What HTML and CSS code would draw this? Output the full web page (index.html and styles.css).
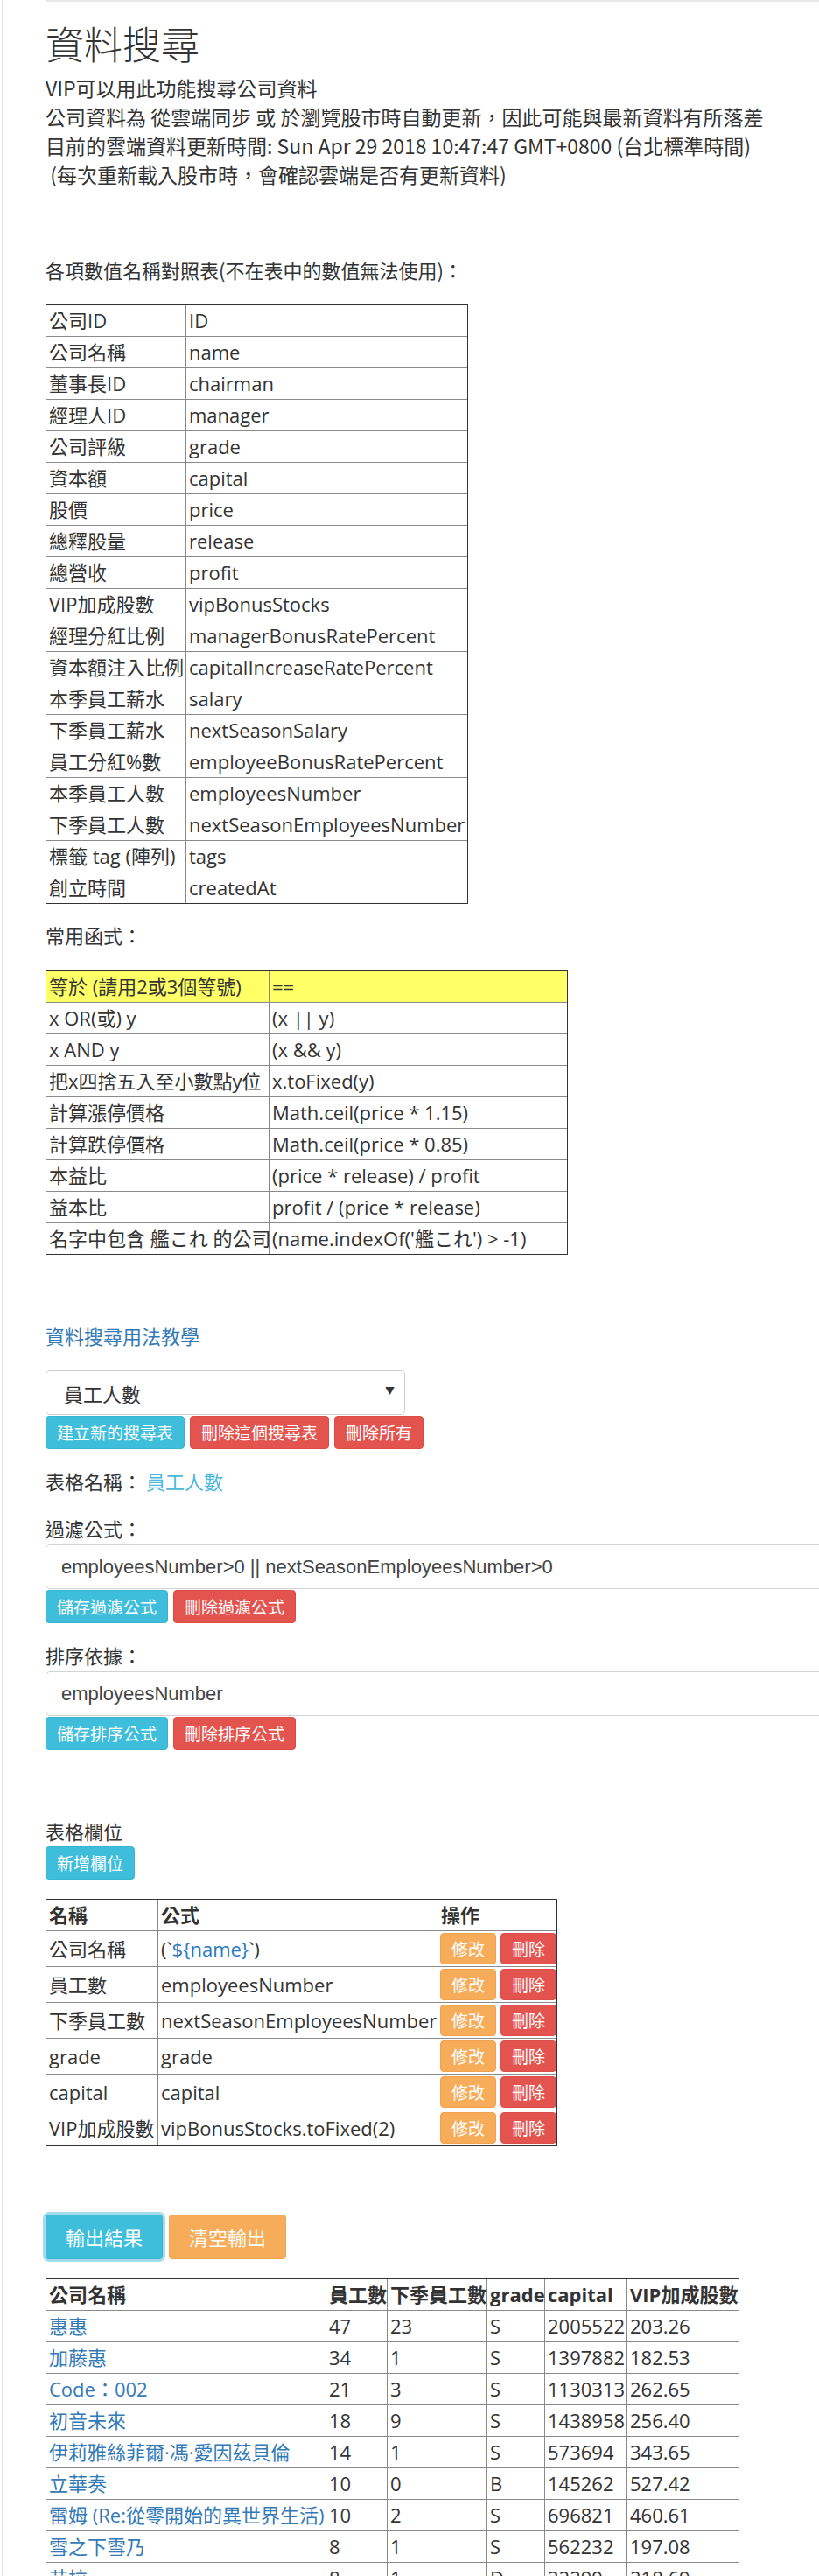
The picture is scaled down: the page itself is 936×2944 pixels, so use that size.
FILE: index.html
```html
<!DOCTYPE html>
<html lang="zh-Hant">
<head>
<meta charset="utf-8">
<title>資料搜尋</title>
<link rel="stylesheet" href="styles.css">
</head>
<body>
<div class="frame">
<div class="content">
  <h1 class="title">資料搜尋</h1>
  <div class="intro">
    <div>VIP可以用此功能搜尋公司資料</div>
    <div>公司資料為 從雲端同步 或 於瀏覽股市時自動更新，因此可能與最新資料有所落差</div>
    <div>目前的雲端資料更新時間: Sun Apr 29 2018 10:47:47 GMT+0800 (台北標準時間)</div>
    <div>&nbsp;(每次重新載入股市時，會確認雲端是否有更新資料)</div>
  </div>

  <p class="line gap-xl">各項數值名稱對照表(不在表中的數值無法使用)：</p>
  <table class="grid names">
    <colgroup><col class="names-c1"><col class="names-c2"></colgroup>
    <tr><td>公司ID</td><td>ID</td></tr>
    <tr><td>公司名稱</td><td>name</td></tr>
    <tr><td>董事長ID</td><td>chairman</td></tr>
    <tr><td>經理人ID</td><td>manager</td></tr>
    <tr><td>公司評級</td><td>grade</td></tr>
    <tr><td>資本額</td><td>capital</td></tr>
    <tr><td>股價</td><td>price</td></tr>
    <tr><td>總釋股量</td><td>release</td></tr>
    <tr><td>總營收</td><td>profit</td></tr>
    <tr><td>VIP加成股數</td><td>vipBonusStocks</td></tr>
    <tr><td>經理分紅比例</td><td>managerBonusRatePercent</td></tr>
    <tr><td>資本額注入比例</td><td>capitalIncreaseRatePercent</td></tr>
    <tr><td>本季員工薪水</td><td>salary</td></tr>
    <tr><td>下季員工薪水</td><td>nextSeasonSalary</td></tr>
    <tr><td>員工分紅%數</td><td>employeeBonusRatePercent</td></tr>
    <tr><td>本季員工人數</td><td>employeesNumber</td></tr>
    <tr><td>下季員工人數</td><td>nextSeasonEmployeesNumber</td></tr>
    <tr><td>標籤 tag (陣列)</td><td>tags</td></tr>
    <tr><td>創立時間</td><td>createdAt</td></tr>
  </table>

  <p class="line gap-func">常用函式：</p>
  <table class="grid funcs">
    <colgroup><col class="funcs-c1"><col class="funcs-c2"></colgroup>
    <tr class="hl"><td>等於 (請用2或3個等號)</td><td>==</td></tr>
    <tr><td>x OR(或) y</td><td>(x || y)</td></tr>
    <tr><td>x AND y</td><td>(x &amp;&amp; y)</td></tr>
    <tr><td>把x四捨五入至小數點y位</td><td>x.toFixed(y)</td></tr>
    <tr><td>計算漲停價格</td><td>Math.ceil(price * 1.15)</td></tr>
    <tr><td>計算跌停價格</td><td>Math.ceil(price * 0.85)</td></tr>
    <tr><td>本益比</td><td>(price * release) / profit</td></tr>
    <tr><td>益本比</td><td>profit / (price * release)</td></tr>
    <tr><td>名字中包含 艦これ 的公司</td><td>(name.indexOf('艦これ') &gt; -1)</td></tr>
  </table>

  <p class="line gap-xl"><a class="link" href="#">資料搜尋用法教學</a></p>

  <div class="select-wrap">
    <select class="select"><option>員工人數</option></select>
    <span class="select-arrow">▼</span>
  </div>
  <div class="btn-row">
    <button class="btn btn-sm info">建立新的搜尋表</button>
    <button class="btn btn-sm danger">刪除這個搜尋表</button>
    <button class="btn btn-sm danger">刪除所有</button>
  </div>

  <p class="line gap-m">表格名稱： <span class="info-text">員工人數</span></p>

  <p class="line gap-label">過濾公式：</p>
  <input class="field" type="text" value="employeesNumber&gt;0 || nextSeasonEmployeesNumber&gt;0">
  <div class="btn-row">
    <button class="btn btn-sm info">儲存過濾公式</button>
    <button class="btn btn-sm danger">刪除過濾公式</button>
  </div>

  <p class="line gap-m">排序依據：</p>
  <input class="field" type="text" value="employeesNumber">
  <div class="btn-row">
    <button class="btn btn-sm info">儲存排序公式</button>
    <button class="btn btn-sm danger">刪除排序公式</button>
  </div>

  <p class="line gap-xl">表格欄位</p>
  <div class="btn-row">
    <button class="btn btn-sm info">新增欄位</button>
  </div>

  <table class="grid cols">
    <colgroup><col class="cols-c1"><col class="cols-c2"><col class="cols-c3"></colgroup>
    <tr class="head"><th>名稱</th><th>公式</th><th>操作</th></tr>
    <tr><td>公司名稱</td><td>(`<span class="code-var">${name}</span>`)</td><td class="ops"><button class="btn btn-op warn">修改</button><button class="btn btn-op danger">刪除</button></td></tr>
    <tr><td>員工數</td><td>employeesNumber</td><td class="ops"><button class="btn btn-op warn">修改</button><button class="btn btn-op danger">刪除</button></td></tr>
    <tr><td>下季員工數</td><td>nextSeasonEmployeesNumber</td><td class="ops"><button class="btn btn-op warn">修改</button><button class="btn btn-op danger">刪除</button></td></tr>
    <tr><td>grade</td><td>grade</td><td class="ops"><button class="btn btn-op warn">修改</button><button class="btn btn-op danger">刪除</button></td></tr>
    <tr><td>capital</td><td>capital</td><td class="ops"><button class="btn btn-op warn">修改</button><button class="btn btn-op danger">刪除</button></td></tr>
    <tr><td>VIP加成股數</td><td>vipBonusStocks.toFixed(2)</td><td class="ops"><button class="btn btn-op warn">修改</button><button class="btn btn-op danger">刪除</button></td></tr>
  </table>

  <div class="btn-row big-row">
    <button class="btn btn-lg info focus">輸出結果</button>
    <button class="btn btn-lg warn">清空輸出</button>
  </div>

  <table class="grid results">
    <colgroup><col class="r1"><col class="r2"><col class="r3"><col class="r4"><col class="r5"><col class="r6"></colgroup>
    <tr class="head"><th>公司名稱</th><th>員工數</th><th>下季員工數</th><th>grade</th><th>capital</th><th>VIP加成股數</th></tr>
    <tr><td><a class="link" href="#">惠惠</a></td><td>47</td><td>23</td><td>S</td><td>2005522</td><td>203.26</td></tr>
    <tr><td><a class="link" href="#">加藤惠</a></td><td>34</td><td>1</td><td>S</td><td>1397882</td><td>182.53</td></tr>
    <tr><td><a class="link" href="#">Code：002</a></td><td>21</td><td>3</td><td>S</td><td>1130313</td><td>262.65</td></tr>
    <tr><td><a class="link" href="#">初音未來</a></td><td>18</td><td>9</td><td>S</td><td>1438958</td><td>256.40</td></tr>
    <tr><td><a class="link" href="#">伊莉雅絲菲爾·馮·愛因茲貝倫</a></td><td>14</td><td>1</td><td>S</td><td>573694</td><td>343.65</td></tr>
    <tr><td><a class="link" href="#">立華奏</a></td><td>10</td><td>0</td><td>B</td><td>145262</td><td>527.42</td></tr>
    <tr><td><a class="link" href="#">雷姆 (Re:從零開始的異世界生活)</a></td><td>10</td><td>2</td><td>S</td><td>696821</td><td>460.61</td></tr>
    <tr><td><a class="link" href="#">雪之下雪乃</a></td><td>8</td><td>1</td><td>S</td><td>562232</td><td>197.08</td></tr>
    <tr><td><a class="link" href="#">艾拉</a></td><td>8</td><td>1</td><td>D</td><td>32299</td><td>218.69</td></tr>
  </table>
</div>
</div>
</body>
</html>
```

FILE: styles.css
```css
html, body {
  margin: 0;
  padding: 0;
  background: #fff;
  overflow-x: hidden;
}
body {
  font-family: "Noto Sans CJK TC", "Noto Sans", sans-serif;
  font-size: 22px;
  line-height: 33px;
  color: #333;
}
.frame {
  margin-left: 2px;
  border-left: 1px solid #e6e6e6;
  min-height: 2944px;
}
.content {
  margin-left: 49px;
  border-top: 2px solid #e8e8e8;
  padding-bottom: 60px;
}
.title {
  margin: 21px 0 0;
  font-size: 44px;
  line-height: 53px;
  font-weight: 300;
  color: #333;
}
.intro { margin-top: 8px; font-size: 23px; }
.line { margin: 0; }
.gap-xl { margin-top: 76px; }
.gap-func { margin-top: 19px; }
.gap-m { margin-top: 20px; }
.gap-label { margin-top: 21px; }
.link { color: #337ab7; text-decoration: none; }
.info-text { color: #4cb8da; }
.code-var { color: #2a7ac2; }

/* tables */
.grid {
  border: 1px solid #333;
  border-spacing: 0;
  table-layout: fixed;
  white-space: nowrap;
  font-family: "Open Sans", "Noto Sans CJK TC", sans-serif;
  font-size: 22px;
  line-height: 33px;
  color: #333;
}
.grid td, .grid th {
  padding: 1px 3px;
  border-left: 1px solid #8a8a8a;
  border-top: 1px solid #8a8a8a;
  text-align: left;
  vertical-align: middle;
}
.grid td:first-child, .grid th:first-child { border-left: 0; }
.grid tr:first-child td, .grid tr:first-child th { border-top: 0; }
.grid th { font-weight: 700; }

.names { margin-top: 23px; width: 481px; }
.names-c1 { width: 159px; }
.names-c2 { width: 322px; }

.funcs { margin-top: 24px; width: 595px; }
.funcs-c1 { width: 254px; }
.funcs-c2 { width: 341px; }
.funcs .hl td { background: #ffff66; }

.cols { margin-top: 22px; width: 583px; }
.cols-c1 { width: 127px; }
.cols-c2 { width: 320px; }
.cols-c3 { width: 136px; }
.cols td.ops { padding: 2px 2px; }

.results { margin-top: 22px; width: 791px; }
.r1 { width: 319px; }
.r2 { width: 70px; }
.r3 { width: 114px; }
.r4 { width: 66px; }
.r5 { width: 94px; }
.r6 { width: 128px; }

/* form controls */
.select-wrap {
  position: relative;
  margin-top: 23px;
  width: 411px;
  height: 51px;
}
.select {
  appearance: none;
  -webkit-appearance: none;
  display: block;
  box-sizing: border-box;
  width: 411px;
  height: 51px;
  padding: 0 20px;
  border: 1px solid #cfcfcf;
  border-radius: 5px;
  background: #fff;
  font-family: "Noto Sans CJK TC", sans-serif;
  font-size: 22px;
  color: #333;
}
.select-arrow {
  position: absolute;
  right: 12px;
  top: 13px;
  font-size: 11px;
  line-height: 20px;
  color: #333;
  pointer-events: none;
}
.field {
  display: block;
  box-sizing: border-box;
  margin-top: 2px;
  width: 920px;
  height: 51px;
  padding: 0 17px;
  border: 1px solid #d2d2d2;
  border-radius: 5px;
  font-family: "Liberation Sans", Arial, sans-serif;
  font-size: 22px;
  color: #444;
  background: #fff;
}

/* buttons */
.btn-row {
  display: flex;
  gap: 6px;
  margin-top: 1px;
}
.btn {
  box-sizing: border-box;
  border: 1px solid transparent;
  border-radius: 4px;
  color: #fff;
  font-family: "Noto Sans CJK TC", sans-serif;
  white-space: nowrap;
  cursor: pointer;
}
.btn-sm {
  font-size: 19px;
  line-height: 28px;
  padding: 4px 12px;
}
.btn-lg {
  font-size: 22px;
  line-height: 33px;
  padding: 8px 22px;
}
.btn-op {
  width: 64px;
  height: 36px;
  padding: 0;
  font-size: 19px;
  line-height: 34px;
}
.btn-op + .btn-op { margin-left: 5px; }
.info { background: #3ebedb; border-color: #36b4d1; }
.danger { background: #e4544f; border-color: #dc4b46; }
.warn { background: #f6ac58; border-color: #f2a24c; }
.big-row { margin-top: 78px; gap: 7px; align-items: center; }
.focus { box-shadow: 0 0 0 3px rgba(91, 192, 222, 0.55); }
```
